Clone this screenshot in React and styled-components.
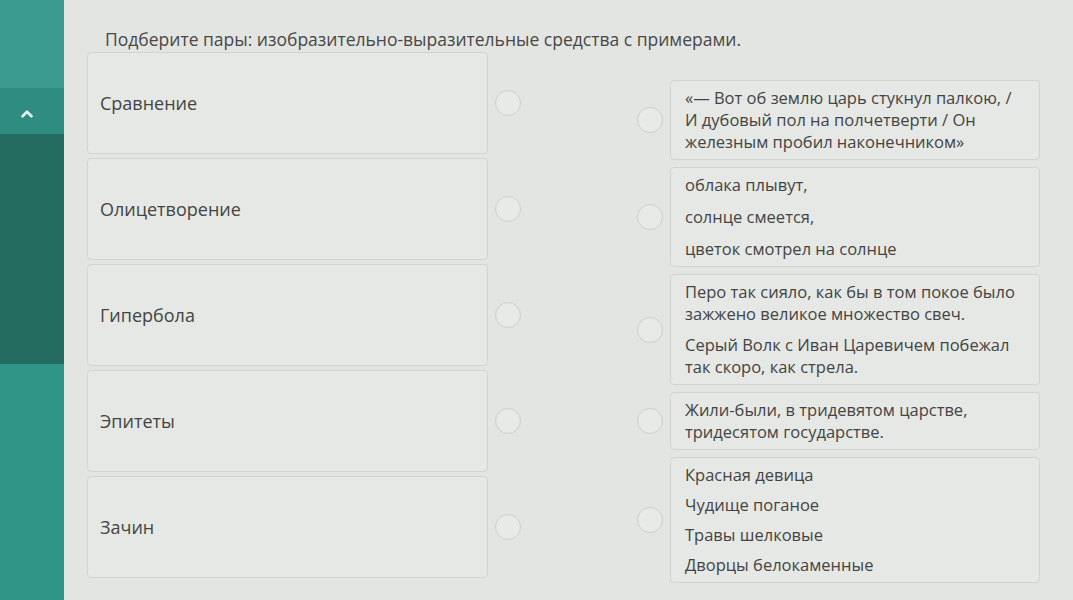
import React from 'react';
import styled, {createGlobalStyle} from 'styled-components';
import {ChevronUp} from 'lucide-react';

const GlobalStyle = createGlobalStyle`
  html, body {
    margin: 0;
    padding: 0;
    background: #e3e5e2;
    font-family: "Open Sans", "Noto Sans", sans-serif;
  }
`;

const terms = ['Сравнение', 'Олицетворение', 'Гипербола', 'Эпитеты', 'Зачин'];

const examples = [
  {gap: 0, lines: ['«— Вот об землю царь стукнул палкою, / И дубовый пол на полчетверти / Он железным пробил наконечником»']},
  {gap: 10, lines: ['облака плывут,', 'солнце смеется,', 'цветок смотрел на солнце']},
  {gap: 9, lines: ['Перо так сияло, как бы в том покое было зажжено великое множество свеч.', 'Серый Волк с Иван Царевичем побежал так скоро, как стрела.']},
  {gap: 0, lines: ['Жили-были, в тридевятом царстве, тридесятом государстве.']},
  {gap: 8, lines: ['Красная девица', 'Чудище поганое', 'Травы шелковые', 'Дворцы белокаменные']},
];

const App = () => {
  return (
    <>
      <GlobalStyle />
      <Page>
        <Sidebar>
          <SideTop />
          <SideToggle>
            <ChevronUp size={18} strokeWidth={3.5} color="#e4f4f0" />
          </SideToggle>
          <SideActive />
          <SideRest />
        </Sidebar>
        <Main>
          <Title>Подберите пары: изобразительно-выразительные средства с примерами.</Title>
          <Board>
            <LeftCol>
              {terms.map(term => (
                <Pair key={term}>
                  <TermCard>{term}</TermCard>
                  <Radio />
                </Pair>
              ))}
            </LeftCol>
            <RightCol>
              {examples.map((ex, i) => (
                <Pair key={i}>
                  <Radio />
                  <ExampleCard gap={ex.gap}>
                    {ex.lines.map(line => (
                      <Line key={line}>{line}</Line>
                    ))}
                  </ExampleCard>
                </Pair>
              ))}
            </RightCol>
          </Board>
        </Main>
      </Page>
    </>
  );
}

const Page = styled.div`
  display: flex;
  width: 1073px;
  height: 600px;
  overflow: hidden;
`;

const Sidebar = styled.div`
  width: 64px;
  flex-shrink: 0;
  display: flex;
  flex-direction: column;
`;

const SideTop = styled.div`
  height: 88px;
  background: #3b9b90;
`;

const SideToggle = styled.div`
  height: 46px;
  background: #2f8c81;
  display: flex;
  align-items: center;
  padding-left: 18px;
  padding-top: 6px;
  box-sizing: border-box;
`;

const SideActive = styled.div`
  height: 230px;
  background: #246b60;
`;

const SideRest = styled.div`
  flex: 1;
  background: #309587;
`;

const Main = styled.div`
  flex: 1;
  padding: 29px 0 0 23px;
  display: flex;
  flex-direction: column;
`;

const Title = styled.div`
  font-size: 17.5px;
  line-height: 21px;
  color: #474847;
  margin-left: 18px;
`;

const Board = styled.div`
  display: flex;
  gap: 116px;
  margin-top: 2px;
`;

const LeftCol = styled.div`
  display: flex;
  flex-direction: column;
  gap: 4px;
`;

const RightCol = styled.div`
  display: flex;
  flex-direction: column;
  gap: 7px;
  padding-top: 28px;
`;

const Pair = styled.div`
  display: flex;
  align-items: center;
  gap: 7px;
`;

const TermCard = styled.div`
  width: 401px;
  height: 102px;
  box-sizing: border-box;
  border: 1px solid #d2d4d1;
  border-radius: 4px;
  background: #e6e8e5;
  display: flex;
  align-items: center;
  padding-left: 12px;
  font-size: 18px;
  color: #434443;
`;

const ExampleCard = styled.div`
  width: 370px;
  box-sizing: border-box;
  border: 1px solid #d2d4d1;
  border-radius: 4px;
  background: #e6e8e5;
  padding: 6px 24px 6px 14px;
  display: flex;
  flex-direction: column;
  gap: ${props => props.gap}px;
`;

const Line = styled.div`
  font-size: 16.5px;
  line-height: 22px;
  color: #434443;
`;

const Radio = styled.div`
  width: 26px;
  height: 26px;
  flex-shrink: 0;
  box-sizing: border-box;
  border: 1.5px solid #cdcfcc;
  border-radius: 50%;
  background: #e8eae7;
`;

export default App;
